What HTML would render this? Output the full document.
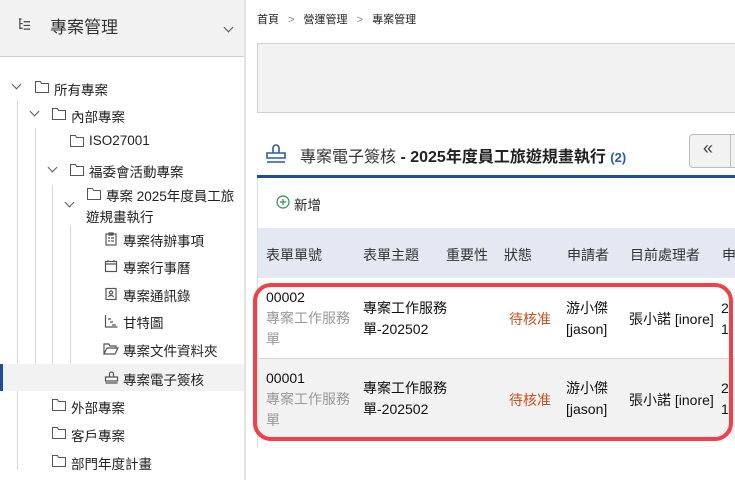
<!DOCTYPE html>
<html><head><meta charset="utf-8"><style>
*{margin:0;padding:0;box-sizing:border-box}
body{width:735px;height:480px;overflow:hidden;background:#fff;font-family:"Liberation Sans","Noto Sans CJK TC",sans-serif;color:#222;position:relative}
.a{position:absolute;white-space:nowrap}
.side{position:absolute;left:0;top:0;width:246px;height:480px;border-right:2px solid #e3e3e3}
.hd{position:absolute;left:0;top:0;width:244px;height:57px;background:#f2f2f2;border-bottom:1px solid #cfcfcf}
.t{font-size:13.5px;color:#222}
.vl{position:absolute;width:1px;background:#d8d8d8}
.fd{position:absolute;width:14px;height:12px}
.ch{position:absolute;width:7px;height:7px;border-right:1.3px solid #555;border-bottom:1.3px solid #555;transform:rotate(45deg)}
.th{font-size:14px;color:#333;top:245px}
.c{font-size:14px;color:#111}
</style></head><body>
<svg width="0" height="0" style="position:absolute"><defs><symbol id="f" viewBox="0 0 14 12"><path d="M0.5 0.5h5l1 2h7v9h-13z" fill="none" stroke="#555" stroke-width="1"/></symbol></defs></svg>
<div class="side">
 <div class="hd">
  <svg class="a" style="left:18px;top:18px" width="13" height="13" viewBox="0 0 14 14" fill="none" stroke="#444" stroke-width="1.3"><path d="M1 1h3M2 1v11M2 6h3M2 11h3M6 4h7M6 8h7M6 12h7"/></svg>
  <div class="a" style="left:50px;top:13px;font-size:17px;color:#333">專案管理</div>
  <div class="ch" style="left:225px;top:24px"></div>
 </div>
 <div class="vl" style="left:17px;top:100px;height:370px"></div>
 <div class="vl" style="left:35px;top:128px;height:262px"></div>
 <div class="vl" style="left:52px;top:185px;height:205px"></div>
 <div class="vl" style="left:70px;top:225px;height:165px"></div>
 <div class="a" style="left:0;top:364px;width:244px;height:27px;background:#f2f2f2"></div>
 <div class="a" style="left:0;top:364px;width:3px;height:27px;background:#1f4e99"></div>

 <div class="ch" style="left:13px;top:81px"></div><svg class="fd" style="left:35px;top:81px"><use href="#f"/></svg><div class="a t" style="left:54px;top:79px">所有專案</div>
 <div class="ch" style="left:31px;top:108px"></div><svg class="fd" style="left:52px;top:108px"><use href="#f"/></svg><div class="a t" style="left:71px;top:106px">內部專案</div>
 <svg class="fd" style="left:70px;top:135px"><use href="#f"/></svg><div class="a t" style="left:89px;top:133px">ISO27001</div>
 <div class="ch" style="left:49px;top:164px"></div><svg class="fd" style="left:70px;top:164px"><use href="#f"/></svg><div class="a t" style="left:89px;top:161px">福委會活動專案</div>
 <div class="ch" style="left:66px;top:199px"></div><svg class="fd" style="left:87px;top:188px"><use href="#f"/></svg><div class="a t" style="left:106px;top:185px">專案 2025年度員工旅</div><div class="a t" style="left:86px;top:206px">遊規畫執行</div>
 <svg class="a" style="left:104px;top:232px" width="14" height="14" fill="none" stroke="#555" stroke-width="1.2"><rect x="2" y="2" width="10" height="11"/><path d="M5 1h4v2H5zM4 6h2M7 6h3M4 9h2M7 9h3"/></svg><div class="a t" style="left:123px;top:230px">專案待辦事項</div>
 <svg class="a" style="left:104px;top:259px" width="14" height="14" fill="none" stroke="#555" stroke-width="1.2"><rect x="1.5" y="2.5" width="11" height="10"/><path d="M1.5 5h11M4 1v2M10 1v2"/></svg><div class="a t" style="left:123px;top:257px">專案行事曆</div>
 <svg class="a" style="left:104px;top:287px" width="14" height="14" fill="none" stroke="#555" stroke-width="1.2"><rect x="2" y="1.5" width="10" height="11"/><circle cx="7" cy="5.5" r="1.6"/><path d="M4.5 10c.5-2 4.5-2 5 0"/></svg><div class="a t" style="left:123px;top:285px">專案通訊錄</div>
 <svg class="a" style="left:104px;top:314px" width="14" height="14" fill="none" stroke="#555" stroke-width="1.2"><path d="M1.5 1v12h12M4 5h3M6 8h3M8 11h4"/></svg><div class="a t" style="left:123px;top:312px">甘特圖</div>
 <svg class="a" style="left:103px;top:342px" width="16" height="14" fill="none" stroke="#555" stroke-width="1.2"><path d="M1 12V2h5l1 2h6v2M1 12l3-6h11l-3 6z"/></svg><div class="a t" style="left:123px;top:340px">專案文件資料夾</div>
 <svg class="a" style="left:104px;top:370px" width="15" height="15" fill="none" stroke="#555" stroke-width="1.2"><path d="M5.5 7V4a2 2 0 014 0v3M1.5 7h12v4h-12zM1.5 13h12"/></svg><div class="a t" style="left:123px;top:369px">專案電子簽核</div>
 <svg class="fd" style="left:52px;top:399px"><use href="#f"/></svg><div class="a t" style="left:71px;top:397px">外部專案</div>
 <svg class="fd" style="left:52px;top:427px"><use href="#f"/></svg><div class="a t" style="left:71px;top:425px">客戶專案</div>
 <svg class="fd" style="left:52px;top:455px"><use href="#f"/></svg><div class="a t" style="left:71px;top:453px">部門年度計畫</div>
</div>

<div class="a" style="left:257px;top:11px;font-size:11px;color:#222">首頁 <span style="color:#888;margin:0 6px">&gt;</span> 營運管理 <span style="color:#888;margin:0 6px">&gt;</span> 專案管理</div>
<div class="a" style="left:257px;top:43px;width:480px;height:70px;background:#f2f2f2;border:1px solid #d0d0d0"></div>

<svg class="a" style="left:264px;top:141px" width="24" height="24" fill="none" stroke="#2a5aa8" stroke-width="1.6"><path d="M9 12V7a3 3 0 016 0v5M3 12h18v5H3zM3 21h18"/></svg>
<div class="a" style="left:300px;top:143px;font-size:16px;color:#333">專案電子簽核 <b style="color:#222">- 2025年度員工旅遊規畫執行</b> <b style="font-size:13px;color:#2a5aa8">(2)</b></div>
<div class="a" style="left:689px;top:134px;width:50px;height:34px;border:1px solid #bbb;border-radius:4px;background:#f2f2f2"></div>
<div class="a" style="left:730px;top:134px;width:1px;height:34px;background:#bbb"></div>
<div class="a" style="left:703px;top:138px;font-size:18px;color:#444">«</div>
<div class="a" style="left:257px;top:175px;width:478px;height:3px;background:#1f4e99"></div>
<div class="a" style="left:257px;top:178px;width:1px;height:270px;background:#ddd"></div>
<svg class="a" style="left:276px;top:195px" width="14" height="14" fill="none" stroke="#2e8b57" stroke-width="1.2"><circle cx="7" cy="7" r="6"/><path d="M7 4v6M4 7h6"/></svg>
<div class="a" style="left:294px;top:194px;font-size:13.5px;color:#222">新增</div>

<div class="a" style="left:258px;top:228px;width:477px;height:50px;background:#e3e8f3"></div>
<div class="a th" style="left:266px">表單單號</div>
<div class="a th" style="left:363px">表單主題</div>
<div class="a th" style="left:446px">重要性</div>
<div class="a th" style="left:504px">狀態</div>
<div class="a th" style="left:567px">申請者</div>
<div class="a th" style="left:630px">目前處理者</div>
<div class="a th" style="left:722px">申</div>

<div class="a" style="left:258px;top:358px;width:477px;height:80px;background:#f2f2f2;border-top:1px solid #d8d8d8"></div>

<div class="a c" style="left:266px;top:289px">00002</div>
<div class="a c" style="left:266px;top:308px;color:#999;line-height:21px">專案工作服務<br>單</div>
<div class="a c" style="left:363px;top:298px;line-height:21px">專案工作服務<br>單-202502</div>
<div class="a c" style="left:509px;top:309px;color:#c8501e">待核准</div>
<div class="a c" style="left:566px;top:298px;line-height:21px">游小傑<br>[jason]</div>
<div class="a c" style="left:629px;top:309px">張小諾 [inore]</div>
<div class="a c" style="left:721px;top:298px;line-height:21px">2<br>1</div>

<div class="a c" style="left:266px;top:370px">00001</div>
<div class="a c" style="left:266px;top:389px;color:#999;line-height:21px">專案工作服務<br>單</div>
<div class="a c" style="left:363px;top:378px;line-height:21px">專案工作服務<br>單-202502</div>
<div class="a c" style="left:509px;top:390px;color:#c8501e">待核准</div>
<div class="a c" style="left:566px;top:378px;line-height:21px">游小傑<br>[jason]</div>
<div class="a c" style="left:629px;top:390px">張小諾 [inore]</div>
<div class="a c" style="left:721px;top:378px;line-height:21px">2<br>1</div>

<div class="a" style="left:253px;top:283px;width:480px;height:158px;border:4px solid #f2404a;border-radius:18px"></div>
</body></html>
